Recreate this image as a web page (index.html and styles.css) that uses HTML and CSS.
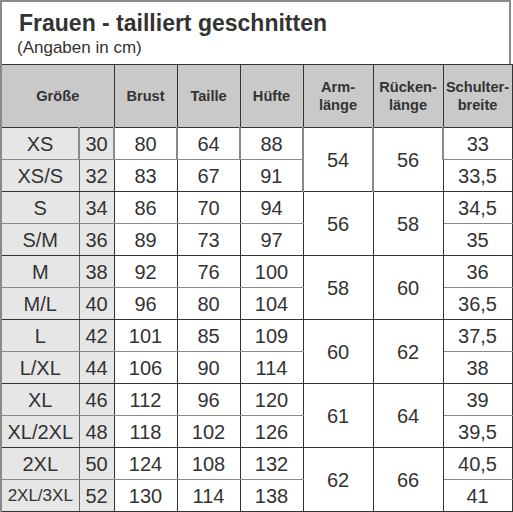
FILE: index.html
```html
<!DOCTYPE html>
<html lang="de">
<head>
<meta charset="utf-8">
<title>Frauen - tailliert geschnitten</title>
<link rel="stylesheet" href="styles.css">
</head>
<body>
<div class="sheet">
  <div class="head">
    <div class="title">Frauen - tailliert geschnitten</div>
    <div class="sub">(Angaben in cm)</div>
  </div>
  <table class="chart">
    <colgroup>
      <col class="c-size"><col class="c-num"><col class="c-a"><col class="c-a"><col class="c-a"><col class="c-b"><col class="c-b"><col class="c-c">
    </colgroup>
    <thead>
      <tr>
        <th colspan="2">Größe</th>
        <th>Brust</th>
        <th>Taille</th>
        <th>Hüfte</th>
        <th>Arm-<br>länge</th>
        <th>Rücken-<br>länge</th>
        <th>Schulter-<br>breite</th>
      </tr>
    </thead>
    <tbody>
      <tr class="first"><td class="sz">XS</td><td class="nr">30</td><td>80</td><td>64</td><td>88</td><td rowspan="2">54</td><td rowspan="2">56</td><td>33</td></tr>
      <tr class="second"><td class="sz">XS/S</td><td class="nr">32</td><td>83</td><td>67</td><td>91</td><td>33,5</td></tr>
      <tr class="first"><td class="sz">S</td><td class="nr">34</td><td>86</td><td>70</td><td>94</td><td rowspan="2">56</td><td rowspan="2">58</td><td>34,5</td></tr>
      <tr class="second"><td class="sz">S/M</td><td class="nr">36</td><td>89</td><td>73</td><td>97</td><td>35</td></tr>
      <tr class="first"><td class="sz">M</td><td class="nr">38</td><td>92</td><td>76</td><td>100</td><td rowspan="2">58</td><td rowspan="2">60</td><td>36</td></tr>
      <tr class="second"><td class="sz">M/L</td><td class="nr">40</td><td>96</td><td>80</td><td>104</td><td>36,5</td></tr>
      <tr class="first"><td class="sz">L</td><td class="nr">42</td><td>101</td><td>85</td><td>109</td><td rowspan="2">60</td><td rowspan="2">62</td><td>37,5</td></tr>
      <tr class="second"><td class="sz">L/XL</td><td class="nr">44</td><td>106</td><td>90</td><td>114</td><td>38</td></tr>
      <tr class="first"><td class="sz">XL</td><td class="nr">46</td><td>112</td><td>96</td><td>120</td><td rowspan="2">61</td><td rowspan="2">64</td><td>39</td></tr>
      <tr class="second"><td class="sz">XL/2XL</td><td class="nr">48</td><td>118</td><td>102</td><td>126</td><td>39,5</td></tr>
      <tr class="first"><td class="sz">2XL</td><td class="nr">50</td><td>124</td><td>108</td><td>132</td><td rowspan="2">62</td><td rowspan="2">66</td><td>40,5</td></tr>
      <tr class="second"><td class="sz small">2XL/3XL</td><td class="nr">52</td><td>130</td><td>114</td><td>138</td><td>41</td></tr>
    </tbody>
  </table>
</div>
</body>
</html>
```

FILE: styles.css
```css
html, body {
  margin: 0;
  padding: 0;
  background: #ffffff;
}

.sheet {
  width: 511px;
  font-family: "Liberation Sans", Arial, sans-serif;
  color: #333333;
}

.head {
  box-sizing: border-box;
  height: 64px;
  border-top: 2px solid #8a8a8a;
  border-left: 2px solid #8a8a8a;
  border-right: 2px solid #8a8a8a;
  padding: 8px 0 0 15px;
}

.title {
  font-size: 23px;
  font-weight: bold;
  line-height: 27px;
  padding-left: 2px;
}

.sub {
  font-size: 17px;
  line-height: 20px;
  margin-top: 1px;
}

.chart {
  width: 511px;
  border-collapse: collapse;
  table-layout: fixed;
}

.c-size { width: 78px; }
.c-num { width: 35px; }
.c-a { width: 63px; }
.c-b { width: 70px; }
.c-c { width: 69px; }

.chart th,
.chart td {
  padding: 0;
  text-align: center;
  vertical-align: middle;
  border: 1px solid #333333;
}

.chart th {
  height: 62px;
  background: #c9c9c9;
  font-size: 14.6px;
  font-weight: bold;
  line-height: 18px;
  color: #333333;
}

.chart td {
  height: 31px;
  font-size: 20px;
  line-height: 22px;
  background: #ffffff;
}

.chart td.sz,
.chart td.nr {
  background: #e6e6e6;
}

.chart td.sz {
  border-right-color: #666666;
}

.chart td.small {
  font-size: 17px;
}

.chart tr.first td {
  border-bottom-color: #8a8a8a;
}

.chart tr.first td[rowspan] {
  border-bottom-color: #333333;
}

.chart tr.second td {
  border-top-color: #8a8a8a;
}

.chart tr:first-child td,
.chart td:first-child,
.chart th:first-child {
  border-left-color: #8a8a8a;
  border-left-width: 2px;
}
```
